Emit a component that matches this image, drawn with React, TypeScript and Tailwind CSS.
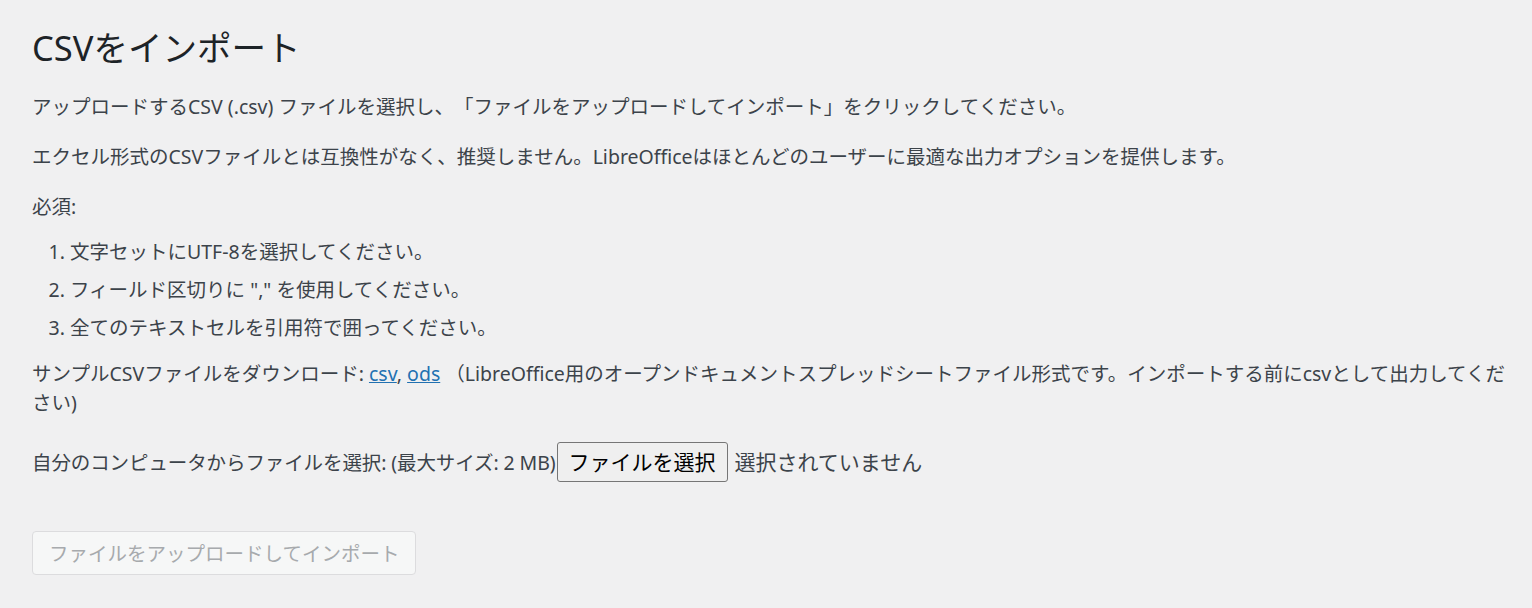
import React from "react";

export default function App() {
  const font = { fontFamily: '"Noto Sans", "Noto Sans CJK JP", sans-serif' };
  return (
    <div
      className="min-h-[608px] w-full bg-[#f0f0f1] pl-[32px] pr-[20px] text-[19.5px] leading-[29px] text-[#3c434a] [text-spacing-trim:space-all]"
      style={font}
    >
      <h1 className="pt-[25px] text-[34.5px] leading-[45px] font-normal text-[#1d2327]">
        CSVをインポート
      </h1>
      <p className="mt-[22px]">
        アップロードするCSV (.csv) ファイルを選択し、「ファイルをアップロードしてインポート」をクリックしてください。
      </p>
      <p className="mt-[21px]">
        エクセル形式のCSVファイルとは互換性がなく、推奨しません。LibreOfficeはほとんどのユーザーに最適な出力オプションを提供します。
      </p>
      <p className="mt-[21px]">必須:</p>
      <ol className="mt-[16px] flex list-decimal flex-col gap-[9px] pl-[38px]">
        <li>文字セットにUTF-8を選択してください。</li>
        <li>フィールド区切りに "," を使用してください。</li>
        <li>全てのテキストセルを引用符で囲ってください。</li>
      </ol>
      <p className="mt-[17px]">
        サンプルCSVファイルをダウンロード:{" "}
        <a href="#" className="text-[#2271b1] underline">
          csv
        </a>
        ,{" "}
        <a href="#" className="text-[#2271b1] underline">
          ods
        </a>{" "}
        （LibreOffice用のオープンドキュメントスプレッドシートファイル形式です。インポートする前にcsvとして出力してくだ
        <br />
        さい)
      </p>
      <div className="mt-[25px] flex items-center">
        <span className="tracking-[-0.1px]">自分のコンピュータからファイルを選択: (最大サイズ: 2 MB)</span>
        <span className="ml-px inline-flex h-[40px] items-center rounded-[3px] border border-[#767676] bg-[#efefef] px-[11px] text-[21px] text-black">
          ファイルを選択
        </span>
        <span className="ml-[7px] text-[21px]">選択されていません</span>
      </div>
      <div className="mt-[49px]">
        <span className="inline-flex h-[44px] items-center rounded-[4px] border border-[#dcdcde] bg-[#f6f7f7] px-[16px] text-[19.5px] text-[#a7aaad]">
          ファイルをアップロードしてインポート
        </span>
      </div>
    </div>
  );
}
